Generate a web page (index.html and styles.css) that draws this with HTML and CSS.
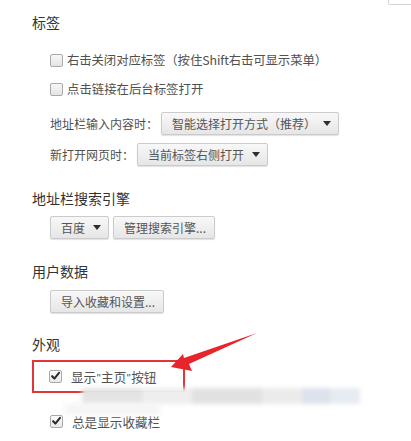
FILE: index.html
```html
<!DOCTYPE html>
<html lang="zh-CN">
<head>
<meta charset="utf-8">
<title>设置</title>
<link rel="stylesheet" href="styles.css">
</head>
<body>
<div class="page">
  <div class="topbar"><div class="search-edge"></div></div>

  <h2 class="heading h-first">标签</h2>
  <div class="row check-row r1"><span class="cb"></span><span class="label l-first">右击关闭对应标签（按住Shift右击可显示菜单）</span></div>
  <div class="row check-row r2"><span class="cb"></span><span class="label">点击链接在后台标签打开</span></div>
  <div class="row select-row r3"><span class="field-label">地址栏输入内容时：</span><span class="btn select s-wide">智能选择打开方式（推荐）<i class="caret"></i></span></div>
  <div class="row select-row r4"><span class="field-label">新打开网页时：</span><span class="btn select s-narrow">当前标签右侧打开<i class="caret"></i></span></div>

  <h2 class="heading h-next">地址栏搜索引擎</h2>
  <div class="row btn-row"><span class="btn select s-baidu">百度<i class="caret"></i></span><span class="btn b-manage">管理搜索引擎...</span></div>

  <h2 class="heading h-next">用户数据</h2>
  <div class="row btn-row b2"><span class="btn b-import">导入收藏和设置...</span></div>

  <h2 class="heading h-look">外观</h2>
  <div class="highlight"><div class="row check-row in-box"><span class="cb checked"><svg viewBox="0 0 12 12" width="12" height="12"><path d="M2.3 6.2 L4.8 8.8 L9.8 2.6" fill="none" stroke="#2b2b2b" stroke-width="2.2" stroke-linecap="round" stroke-linejoin="round"/></svg></span><span class="label l-home">显示<span class="q">"</span>主页<span class="q">"</span>按钮</span></div></div>

  <div class="blur-area">
    <div class="blur-band band1">
      <span class="bz z1"></span><span class="bz z2"></span><span class="bz z3"></span><span class="bz z4"></span><span class="bz z5"></span><span class="bz z6"></span>
    </div>
    <div class="blur-band band2"><span class="bz z7"></span></div>
  </div>

  <div class="row check-row last"><span class="cb checked"><svg viewBox="0 0 12 12" width="12" height="12"><path d="M2.3 6.2 L4.8 8.8 L9.8 2.6" fill="none" stroke="#2b2b2b" stroke-width="2.2" stroke-linecap="round" stroke-linejoin="round"/></svg></span><span class="label l-home">总是显示收藏栏</span></div>

  <svg class="arrow" viewBox="0 0 411 441" width="411" height="441">
    <polygon points="171,367 183,354 184,358 257,333 189,364 192,371" fill="#e8252a"/>
  </svg>
</div>
</body>
</html>
```

FILE: styles.css
```css
html, body {
  margin: 0;
  padding: 0;
  background: #ffffff;
}

body {
  font-family: "Noto Sans CJK SC", "Noto Sans", sans-serif;
  color: #444;
  width: 411px;
  height: 441px;
  overflow: hidden;
}

.page {
  position: relative;
  width: 411px;
  height: 441px;
  box-sizing: border-box;
  padding-left: 32px;
}

.topbar {
  display: flex;
  justify-content: flex-end;
  height: 5px;
}

.search-edge {
  width: 22px;
  height: 4px;
  border: 1px solid #d6d6d6;
  border-top: none;
  border-right: none;
  border-radius: 0 0 0 2px;
}

.heading {
  margin: 0;
  font-size: 14px;
  font-weight: normal;
  color: #333;
  height: 20px;
  line-height: 20px;
}

.h-first { margin-top: 7px; }
.h-next { margin-top: 22px; }
.h-look { margin-top: 21px; }

.row {
  display: flex;
  align-items: center;
  padding-left: 18px;
  font-size: 12.4px;
}

.check-row { height: 24px; }
.r1 { margin-top: 16px; }
.r2 { margin-top: 5px; }
.r3 { margin-top: 11px; height: 23px; }
.r4 { margin-top: 8px; height: 23px; }

.cb {
  width: 11px;
  height: 11px;
  border: 1px solid #a9a9a9;
  border-radius: 2px;
  background: linear-gradient(#f7f7f7, #e4e4e4);
  display: flex;
  align-items: center;
  justify-content: center;
  flex: none;
}

.cb.checked {
  background: linear-gradient(#fbfbfb, #e9e9e9);
}

.label {
  margin-left: 4px;
  color: #505050;
  white-space: nowrap;
}

.l-first { margin-left: 4px; letter-spacing: -0.1px; }
.l-home { margin-left: 9px; font-size: 12.6px; }

.q {
  font-family: "Liberation Sans", sans-serif;
  font-size: 11px;
  margin: 0 0.5px;
}

.field-label {
  color: #505050;
  white-space: nowrap;
  font-size: 12px;
}

.btn {
  display: inline-flex;
  align-items: center;
  height: 21px;
  box-sizing: content-box;
  border: 1px solid #cbcbcb;
  border-radius: 2px;
  background: linear-gradient(#f8f8f8, #e6e6e6);
  box-shadow: 0 1px 1px rgba(0, 0, 0, 0.12);
  color: #555;
  font-size: 12px;
  white-space: nowrap;
  padding: 0 10px;
}

.select {
  justify-content: space-between;
  padding: 0 7px 0 10px;
}

.s-wide {
  margin-left: 3px;
  width: 159px;
}

.s-narrow {
  margin-left: 3px;
  width: 112px;
}

.s-baidu {
  width: 40px;
}

.b-manage {
  margin-left: 4px;
  width: 80px;
}

.b-import {
  width: 92px;
}

.caret {
  width: 0;
  height: 0;
  border-left: 4px solid transparent;
  border-right: 4px solid transparent;
  border-top: 5px solid #2e2e2e;
}

.btn-row { margin-top: 8px; height: 23px; }
.b2 { margin-top: 9px; }

.highlight {
  margin-top: 6px;
  width: 153px;
  height: 33px;
  box-sizing: border-box;
  border: 2.5px solid #e2353a;
  display: flex;
  align-items: center;
}

.highlight .in-box {
  padding-left: 15px;
  margin-top: -1px;
}

.blur-area {
  height: 21px;
  position: relative;
}

.blur-band {
  display: flex;
}

.band1 {
  margin-left: 50px;
  height: 16px;
  margin-top: -5px;
  filter: blur(2px);
}

.band2 {
  margin-left: 33px;
  height: 11px;
  filter: blur(3px);
}

.bz { display: block; height: 100%; }
.z1 { width: 60px; background: #e4e4e4; }
.z2 { width: 50px; background: #eeeeee; }
.z3 { width: 70px; background: #e1e1e1; }
.z4 { width: 40px; background: #ebebeb; }
.z5 { width: 28px; background: #dde2ec; }
.z6 { width: 30px; background: #e7ebf2; }
.z7 { width: 95px; background: #f4f4f4; }

.last { margin-top: 0; }

.arrow {
  position: absolute;
  left: 0;
  top: 0;
  pointer-events: none;
}
```
